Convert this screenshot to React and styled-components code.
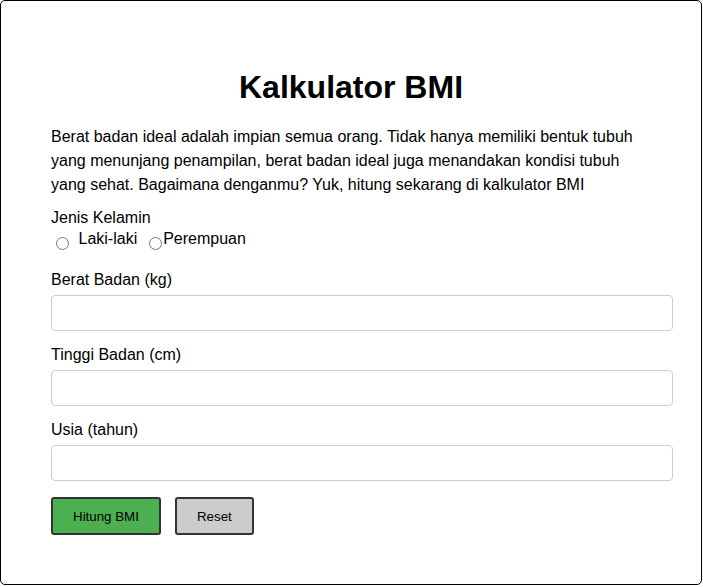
import React from "react";
import styled, { createGlobalStyle } from "styled-components";

const Global = createGlobalStyle`
  html, body { margin: 0; padding: 0; background: #fff; }
  body { font-family: "Liberation Sans", Arial, sans-serif; color: #000; }
  * { font-family: "Liberation Sans", Arial, sans-serif; }
`;

const Card = styled.div`
  width: 702px;
  box-sizing: border-box;
  border: 1px solid #000;
  border-radius: 5px;
  padding: 50px 50px 49px;
  display: flex;
  flex-direction: column;
`;

const Title = styled.h1`
  margin: 18px 0 0;
  font-size: 32px;
  line-height: 37px;
  font-weight: bold;
  text-align: center;
`;

const Intro = styled.p`
  margin: 19px 0 0;
  font-size: 16px;
  line-height: 24px;
`;

const Label = styled.label`
  display: block;
  font-size: 16px;
  line-height: 24px;
  margin-top: ${(p) => p.$top || 0}px;
`;

const RadioRow = styled.div`
  display: flex;
  align-items: flex-start;
  font-size: 16px;
  line-height: 18px;
  margin-bottom: 18px;
`;

const Radio = styled.input.attrs({ type: "radio" })`
  width: 13px;
  height: 13px;
  margin: 7px ${(p) => p.$right}px 0 ${(p) => p.$left}px;
  flex: none;
`;

const RadioText = styled.label`
  display: block;
`;

const Field = styled.div`
  display: flex;
  flex-direction: column;
  margin-bottom: 12px;
`;

const Input = styled.input`
  box-sizing: content-box;
  width: 100%;
  height: 14px;
  padding: 10px;
  margin: 3px 0 0;
  border: 1px solid #ccc;
  border-radius: 4px;
  font-size: 13.33px;
  outline: none;
`;

const Buttons = styled.div`
  display: flex;
  gap: 14px;
  margin-top: 4px;
`;

const Button = styled.button`
  height: 38px;
  padding: 0 20px;
  border: 2px solid #333;
  border-radius: 3px;
  background: ${(p) => p.$bg};
  color: #000;
  font-size: 13.33px;
  cursor: pointer;
`;

export default function App() {
  return (
    <>
      <Global />
      <Card>
        <Title>Kalkulator BMI</Title>
        <Intro>
          Berat badan ideal adalah impian semua orang. Tidak hanya memiliki bentuk tubuh
          yang menunjang penampilan, berat badan ideal juga menandakan kondisi tubuh
          yang sehat. Bagaimana denganmu? Yuk, hitung sekarang di kalkulator BMI
        </Intro>
        <Label $top={9}>Jenis Kelamin</Label>
        <RadioRow>
          <Radio id="laki" name="gender" $left={5} $right={9.5} />
          <RadioText htmlFor="laki">Laki-laki</RadioText>
          <Radio id="perempuan" name="gender" $left={11.5} $right={1.5} />
          <RadioText htmlFor="perempuan">Perempuan</RadioText>
        </RadioRow>
        <Field>
          <Label htmlFor="berat">Berat Badan (kg)</Label>
          <Input id="berat" type="number" />
        </Field>
        <Field>
          <Label htmlFor="tinggi">Tinggi Badan (cm)</Label>
          <Input id="tinggi" type="number" />
        </Field>
        <Field>
          <Label htmlFor="usia">Usia (tahun)</Label>
          <Input id="usia" type="number" />
        </Field>
        <Buttons>
          <Button $bg="#4caf50">Hitung BMI</Button>
          <Button $bg="#ccc">Reset</Button>
        </Buttons>
      </Card>
    </>
  );
}
